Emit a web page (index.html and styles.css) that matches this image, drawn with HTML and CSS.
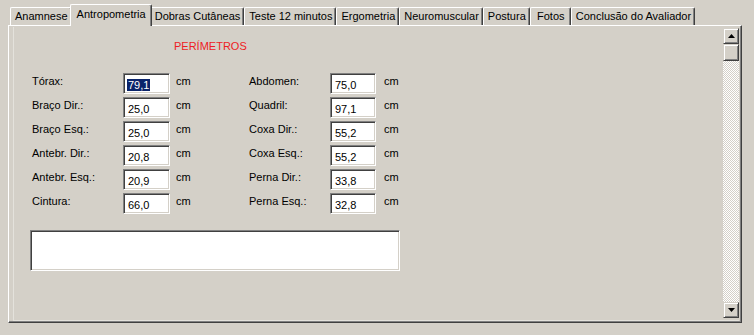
FILE: index.html
```html
<!DOCTYPE html>
<html lang="pt-BR">
<head>
    <meta charset="UTF-8">
    <title>Antropometria</title>
    <link rel="stylesheet" href="styles.css">
</head>
<body>

    <div class="tabs">
        <div class="tab">Anamnese</div>
        <div class="tab active">Antropometria</div>
        <div class="tab">Dobras Cutâneas</div>
        <div class="tab">Teste 12 minutos</div>
        <div class="tab">Ergometria</div>
        <div class="tab">Neuromuscular</div>
        <div class="tab">Postura</div>
        <div class="tab">Fotos</div>
        <div class="tab">Conclusão do Avaliador</div>
    </div>

    <div class="page">
        <div class="scroll-box">
            <div class="scroll-content">
                <div class="title">PERÍMETROS</div>

                <div class="grid">
                    <div class="label">Tórax:</div>
                    <div class="field"><span class="selected">79,1</span></div>
                    <div class="unit">cm</div>
                    <div class="label">Abdomen:</div>
                    <div class="field">75,0</div>
                    <div class="unit unit2">cm</div>

                    <div class="label">Braço Dir.:</div>
                    <div class="field">25,0</div>
                    <div class="unit">cm</div>
                    <div class="label">Quadril:</div>
                    <div class="field">97,1</div>
                    <div class="unit unit2">cm</div>

                    <div class="label">Braço Esq.:</div>
                    <div class="field">25,0</div>
                    <div class="unit">cm</div>
                    <div class="label">Coxa Dir.:</div>
                    <div class="field">55,2</div>
                    <div class="unit unit2">cm</div>

                    <div class="label">Antebr. Dir.:</div>
                    <div class="field">20,8</div>
                    <div class="unit">cm</div>
                    <div class="label">Coxa Esq.:</div>
                    <div class="field">55,2</div>
                    <div class="unit unit2">cm</div>

                    <div class="label">Antebr. Esq.:</div>
                    <div class="field">20,9</div>
                    <div class="unit">cm</div>
                    <div class="label">Perna Dir.:</div>
                    <div class="field">33,8</div>
                    <div class="unit unit2">cm</div>

                    <div class="label">Cintura:</div>
                    <div class="field">66,0</div>
                    <div class="unit">cm</div>
                    <div class="label">Perna Esq.:</div>
                    <div class="field">32,8</div>
                    <div class="unit unit2">cm</div>
                </div>

                <div class="memo"></div>
            </div>

            <div class="scrollbar">
                <div class="sb-button">
                    <svg width="7" height="4" viewBox="0 0 7 4"><polygon points="3.5,0 7,4 0,4" fill="#000"/></svg>
                </div>
                <div class="sb-thumb"></div>
                <div class="sb-track"></div>
                <div class="sb-button">
                    <svg width="7" height="4" viewBox="0 0 7 4"><polygon points="0,0 7,0 3.5,4" fill="#000"/></svg>
                </div>
            </div>
        </div>
    </div>

</body>
</html>
```

FILE: styles.css
```css
body {
    margin: 0;
    width: 754px;
    height: 335px;
    background-color: #d4d0c8;
    font-family: "Liberation Sans", Arial, sans-serif;
    font-size: 11px;
    color: #000;
    overflow: hidden;
}
.tabs {
    display: flex;
    align-items: flex-end;
    height: 25px;
    padding-left: 10px;
    position: relative;
    z-index: 2;
}
.tab {
    min-width: 32px;
    height: 17px;
    line-height: 17px;
    padding: 0 3px 0 4px;
    border-top: 1px solid #fff;
    border-left: 1px solid #fff;
    border-right: 1px solid #404040;
    box-shadow: inset -1px 0 #808080;
    border-radius: 2px 2px 0 0;
    white-space: nowrap;
    text-align: center;
}
.tab.active {
    height: 21px;
    line-height: 19px;
    margin: 0 -2px -1px -2px;
    padding: 0 5px 0 6px;
    background-color: #d4d0c8;
    position: relative;
    z-index: 3;
}
.page {
    margin-left: 8px;
    width: 732px;
    height: 296px;
    border-top: 1px solid #fff;
    border-left: 1px solid #fff;
    border-right: 1px solid #404040;
    border-bottom: 1px solid #404040;
    box-shadow: inset -1px -1px #808080;
    position: relative;
    z-index: 1;
}
.scroll-box {
    display: flex;
    margin: 1px 2px 0 4px;
    height: 293px;
    border-left: 1px solid #e4e2dc;
    border-bottom: 1px solid #e4e2dc;
}
.scroll-content {
    flex: 1;
    padding-left: 18px;
}
.title {
    color: #ee1c24;
    margin: 12px 0 0 142px;
    height: 14px;
    line-height: 14px;
}
.grid {
    display: grid;
    grid-template-columns: 91px 47px 79px 81px 46px auto;
    grid-auto-rows: 21px;
    row-gap: 3px;
    margin-top: 20px;
}
.label {
    padding-top: 2px;
    white-space: nowrap;
}
.field {
    background-color: #fff;
    border-top: 1px solid #808080;
    border-left: 1px solid #808080;
    border-right: 1px solid #fff;
    border-bottom: 1px solid #fff;
    box-shadow: inset 1px 1px #404040, inset -1px -1px #d4d0c8;
    padding: 5px 0 0 4px;
    line-height: 13px;
}
.selected {
    background-color: #0a246a;
    color: #fff;
    margin-left: -1px;
    padding: 0 1px;
}
.unit {
    padding: 2px 0 0 6px;
}
.unit2 {
    padding-left: 8px;
}
.memo {
    margin: 16px 0 0 -2px;
    width: 368px;
    height: 39px;
    background-color: #fff;
    border-top: 1px solid #808080;
    border-left: 1px solid #808080;
    border-right: 1px solid #fff;
    border-bottom: 1px solid #fff;
    box-shadow: inset 1px 1px #404040, inset -1px -1px #d4d0c8;
}
.scrollbar {
    width: 16px;
    display: flex;
    flex-direction: column;
    margin-top: 1px;
    margin-bottom: 2px;
}
.sb-button, .sb-thumb {
    width: 16px;
    height: 16px;
    box-sizing: border-box;
    background-color: #d4d0c8;
    border-top: 1px solid #d4d0c8;
    border-left: 1px solid #d4d0c8;
    border-right: 1px solid #404040;
    border-bottom: 1px solid #404040;
    box-shadow: inset 1px 1px #fff, inset -1px -1px #808080;
    display: flex;
    align-items: center;
    justify-content: center;
}
.sb-thumb {
    height: 17px;
}
.sb-track {
    flex: 1;
    background: repeating-conic-gradient(#fff 0 25%, #d4d0c8 0 50%) 0 0 / 2px 2px;
}
```
